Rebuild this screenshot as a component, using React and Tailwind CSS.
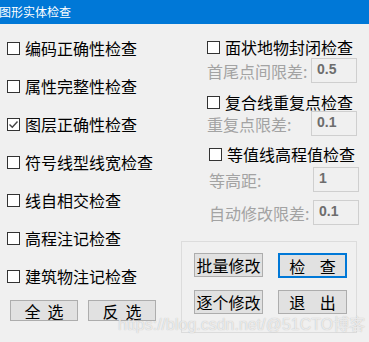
import React from "react";

const CJK = { fontFamily: '"Noto Sans CJK SC", "Liberation Sans", sans-serif' };

const Check = ({ label, checked = false, className = "" }) => (
  <div className={`flex items-center h-[16px] ${className}`}>
    <span className="w-[13px] h-[13px] border border-[#333] bg-white flex items-center justify-center shrink-0">
      {checked && (
        <svg width="11" height="11" viewBox="0 0 11 11">
          <path d="M1.5 5.5 L4.3 8.3 L9.5 2.5" stroke="#444" strokeWidth="1.4" fill="none" />
        </svg>
      )}
    </span>
    <span className="ml-[5px] text-[16px] leading-none text-black whitespace-nowrap">{label}</span>
  </div>
);

const Param = ({ label, value, className = "" }) => (
  <div className={`flex items-center justify-between h-[25px] ${className}`}>
    <span className="text-[16px] leading-none text-[#a3a3a3] whitespace-nowrap">{label}</span>
    <span
      className="w-[46px] h-[25px] border border-[#cfcfcf] bg-[#f0f0f0] pl-[5px] pt-[3px] text-[14px] leading-none font-bold text-[#6d6d6d]"
      style={{ fontFamily: '"Liberation Sans", sans-serif' }}
    >
      {value}
    </span>
  </div>
);

const Btn = ({ children, primary = false, className = "" }) => (
  <button
    className={`flex items-center justify-center bg-[#e1e1e1] text-[16px] leading-none text-black ${
      primary ? "border-2 border-[#0078d7]" : "border border-[#adadad]"
    } ${className}`}
  >
    {children}
  </button>
);

export default function App() {
  return (
    <div className="w-[369px] h-[342px] bg-[#f0f0f0] relative overflow-hidden" style={CJK}>
      <div className="h-[24px] bg-[#0078d7] flex items-center">
        <span className="text-white text-[12px] leading-none -ml-[1px]">图形实体检查</span>
      </div>

      <div className="flex">
        <div className="w-[181px] pl-[7px]">
          <div className="mt-[5px]">
            {[
              ["编码正确性检查", false],
              ["属性完整性检查", false],
              ["图层正确性检查", true],
              ["符号线型线宽检查", false],
              ["线自相交检查", false],
              ["高程注记检查", false],
              ["建筑物注记检查", false],
            ].map(([t, c]) => (
              <div key={t} className="h-[38px] flex items-center">
                <Check label={t} checked={c} />
              </div>
            ))}
          </div>
          <div className="flex gap-[10px] mt-[5px] pl-[3px]">
            <Btn className="w-[68px] h-[21px]">全&nbsp;&nbsp;选</Btn>
            <Btn className="w-[68px] h-[21px]">反&nbsp;&nbsp;选</Btn>
          </div>
        </div>

        <div className="w-[176px]">
          <div className="pl-[26px]">
            <Check label="面状地物封闭检查" className="mt-[15px]" />
            <Param label="首尾点间限差:" value="0.5" className="mt-[3px]" />
            <Check label="复合线重复点检查" className="mt-[11px]" />
            <Param label="重复点限差:" value="0.1" className="mt-[1px]" />
          </div>
          <div className="pl-[28px] -mr-[2px]">
            <Check label="等值线高程值检查" className="mt-[10px]" />
            <Param label="等高距:" value="1" className="mt-[5px]" />
            <Param label="自动修改限差:" value="0.1" className="mt-[8px]" />
          </div>
          <div className="mt-[16px] h-[92px] border border-[#dcdcdc] pl-[12px] pt-[11px]">
            <div className="grid grid-cols-[69px_69px] gap-x-[15px] gap-y-[12px]">
              <Btn className="h-[24px]">批量修改</Btn>
              <Btn primary className="h-[25px]">检&nbsp;&nbsp;&nbsp;&nbsp;查</Btn>
              <Btn className="h-[24px]">逐个修改</Btn>
              <Btn className="h-[24px]">退&nbsp;&nbsp;&nbsp;&nbsp;出</Btn>
            </div>
          </div>
        </div>
      </div>

      <div
        className="absolute left-[118px] top-[317px] text-[16px] leading-none text-white/70 whitespace-nowrap [text-shadow:0_0_1px_#b0b0b0]"
        style={{ fontFamily: '"Liberation Sans", "Noto Sans CJK SC", sans-serif' }}
      >
        https://blog.csdn.net/@51CTO博客
      </div>
    </div>
  );
}
